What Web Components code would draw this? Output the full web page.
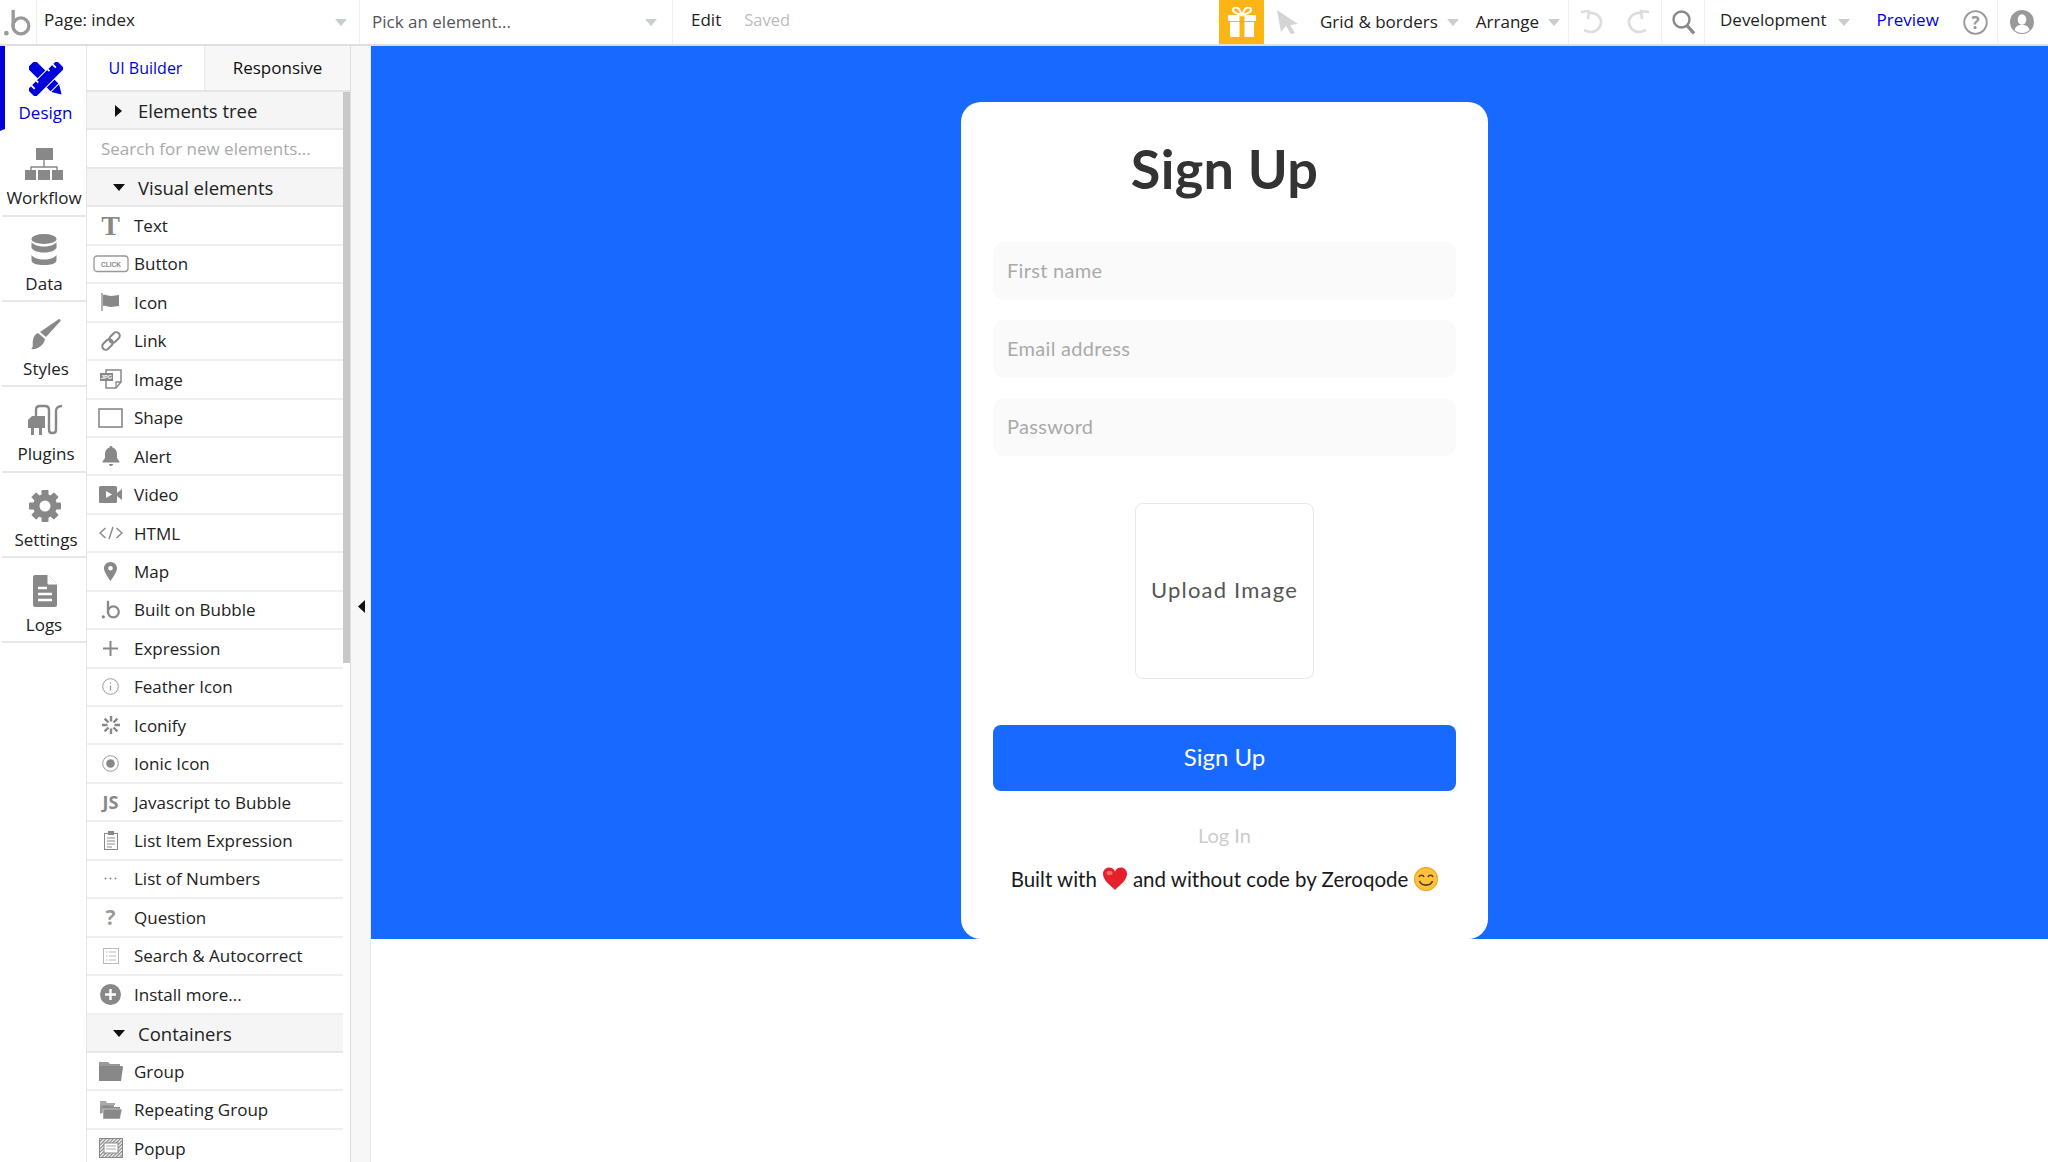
<!DOCTYPE html>
<html>
<head>
<meta charset="utf-8">
<title>Sign Up - editor</title>
<style>
    html, body { margin: 0; height: 100%; overflow: hidden; background: #fff; }
    body { font-family: "Open Sans", "Liberation Sans", sans-serif; color: #222; }
</style>
</head>
<body>
<editor-app></editor-app>
<script>
const bubbleLogo = (w, h, c = '#999') => `<svg width="${w}" height="${h}" viewBox="0 0 30 30"><circle cx="3.5" cy="26" r="2.4" fill="${c}"/><path d="M10.5 2v18" stroke="${c}" stroke-width="3.4" fill="none"/><circle cx="18.5" cy="18.5" r="8.2" stroke="${c}" stroke-width="3.4" fill="none"/></svg>`;
const arrow = (c = '#c5ced3') => `<svg width="12" height="7" viewBox="0 0 12 7" style="display:block"><path d="M0 0h12L6 7z" fill="${c}"/></svg>`;

const railIcons = {
    design: `<svg width="34" height="34" viewBox="-17 -17 34 34"><g transform="rotate(45)"><rect x="-21" y="-5.500" width="33" height="11" fill="#0000dd"/><path d="M13-5.500l9 5.500-9 5.500z" fill="#0000dd"/></g><g transform="rotate(-45)"><rect x="-21" y="-6" width="42" height="12" fill="#0000dd" stroke="#fff" stroke-width="1"/><path d="M-15-6v5M-8-6v3M8-6v3M15-6v5" stroke="#fff" stroke-width="1.800"/></g></svg>`,
    workflow: `<svg width="38" height="32" viewBox="0 0 38 32" fill="#888"><rect x="11" y="0" width="17" height="12"/><path d="M19 12v7M6 23v-4h26v4" stroke="#888" stroke-width="1.4" fill="none"/><rect x="0" y="22" width="11" height="10"/><rect x="13" y="22" width="12" height="10"/><rect x="27" y="22" width="11" height="10"/></svg>`,
    data: `<svg width="26" height="32" viewBox="0 0 26 32" fill="#888"><ellipse cx="13" cy="5" rx="12.5" ry="5"/><path d="M.5 8c2 3 7 4.500 12.500 4.500S23.500 11 25.500 8v6c-2 3-7 4.500-12.500 4.500S2.500 17 .5 14z"/><path d="M.5 17c2 3 7 4.500 12.500 4.500S23.500 20 25.500 17v5c0 4-6 5-12.500 5S.500 26 .500 22z" transform="translate(0 4)"/></svg>`,
    styles: `<svg width="32" height="32" viewBox="0 0 32 32" fill="#888"><path d="M30 0c1 0 2 1 1.500 2L17 18l-6-5z"/><path d="M9 14l7 6c-1 6-7 11-14 10 3-2 1-5 2-9 .5-3 2-6 5-7z"/></svg>`,
    plugins: `<svg width="36" height="32" viewBox="0 0 36 32"><path d="M5 12h13v12H1V16z" fill="#888"/><path d="M4 24h3v7H4zM12 24h3v7h-3z" fill="#888"/><path d="M9 12V6c0-3 1-4 4-4h5c3 0 4 2 4 4v20c0 2 1 3 3 3h1c2 0 3-1 3-3V7c0-3 2-5 6-5" stroke="#888" stroke-width="2.400" fill="none"/></svg>`,
    settings: `<svg width="32" height="32" viewBox="-16 -16 32 32"><g fill="#888"><circle r="12"/><rect x="-3.500" y="-16" width="7" height="32" rx="1"/><rect x="-3.500" y="-16" width="7" height="32" rx="1" transform="rotate(45)"/><rect x="-3.500" y="-16" width="7" height="32" rx="1" transform="rotate(90)"/><rect x="-3.500" y="-16" width="7" height="32" rx="1" transform="rotate(135)"/></g><circle r="5.500" fill="#fff"/></svg>`,
    logs: `<svg width="24" height="32" viewBox="0 0 24 32"><path d="M2 0h13l9 9v21a2 2 0 0 1-2 2H2a2 2 0 0 1-2-2V2a2 2 0 0 1 2-2z" fill="#888"/><path d="M15 0v9h9" fill="#fff" stroke="#fff" stroke-width="1"/><path d="M5 13h9M5 19h14M5 25h14" stroke="#fff" stroke-width="2.400"/></svg>`
};

const rowIcons = {
    text: `<span class="glyph" style="font:bold 28px 'Liberation Serif',serif;color:#888">T</span>`,
    button: `<svg width="36" height="18" viewBox="0 0 36 18"><rect x="1" y="1" width="34" height="15.500" rx="3" fill="none" stroke="#999" stroke-width="1.300"/><text x="18" y="11.500" text-anchor="middle" font-family="Liberation Sans" font-weight="700" font-size="6.500" fill="#888">CLICK</text></svg>`,
    icon: `<svg width="20" height="20" viewBox="0 0 20 20"><path d="M1 1v18" stroke="#888" stroke-width="1.300"/><path d="M2 3c3-1 5 1 8 1s5-1 8-1v11c-3 0-5 1-8 1s-5-2-8-1z" fill="#888"/></svg>`,
    link: `<svg width="22" height="22" viewBox="0 0 22 22" fill="none" stroke="#888" stroke-width="2"><rect x="-6" y="-3.500" width="12" height="7" rx="3.500" transform="translate(7.500 14.500) rotate(-45)"/><rect x="-6" y="-3.500" width="12" height="7" rx="3.500" transform="translate(14.500 7.500) rotate(-45)"/></svg>`,
    image: `<svg width="22" height="20" viewBox="0 0 22 20"><path d="M6 1h15v12l-5 6H6z" fill="#fff" stroke="#888" stroke-width="1.500"/><path d="M16 19v-6h5" fill="none" stroke="#888" stroke-width="1.300"/><rect x="0" y="4" width="13" height="8" fill="#888"/><text x="6.500" y="10.300" text-anchor="middle" font-family="Liberation Sans" font-weight="700" font-size="5.500" fill="#fff">JPG</text></svg>`,
    shape: `<svg width="25" height="20" viewBox="0 0 25 20"><rect x="1" y="1" width="23" height="18" fill="#fff" stroke="#888" stroke-width="1.600"/></svg>`,
    alert: `<svg width="18" height="21" viewBox="0 0 18 21" fill="#888"><path d="M9 0c1 0 1.500.7 1.500 1.500C13 2.300 15 4.500 15 8v4l2.500 3.500v1H.5v-1L3 12V8c0-3.500 2-5.700 4.500-6.500C7.500.7 8 0 9 0z"/><path d="M7 18h4c0 1.500-1 2-2 2s-2-.5-2-2z"/></svg>`,
    video: `<svg width="24" height="17" viewBox="0 0 24 17"><rect x="0" y="0" width="18" height="17" rx="1.500" fill="#888"/><path d="M18 7l5-4v11l-5-4z" fill="#888"/><path d="M7 5l6 3.500L7 12z" fill="#fff"/></svg>`,
    html: `<svg width="24" height="14" viewBox="0 0 24 14" fill="none" stroke="#888" stroke-width="1.400"><path d="M6.500 2L1 7l5.500 5M17.500 2L23 7l-5.500 5M14 1l-4 12"/></svg>`,
    map: `<svg width="13" height="19" viewBox="0 0 13 19"><path fill-rule="evenodd" d="M6.500 0C10 0 13 2.800 13 6.300c0 3.700-4.300 9.700-6.500 12.700C4.300 16 0 10 0 6.300 0 2.800 3 0 6.500 0zm0 4a2.300 2.300 0 1 0 0 4.600 2.300 2.300 0 0 0 0-4.600z" fill="#888"/></svg>`,
    bubble: bubbleLogo(20, 21, '#888'),
    plus: `<svg width="15" height="15" viewBox="0 0 15 15"><path d="M7.500 0v15M0 7.500h15" stroke="#888" stroke-width="2"/></svg>`,
    feather: `<svg width="17" height="17" viewBox="0 0 17 17" fill="none" stroke="#999" stroke-width="1"><circle cx="8.500" cy="8.500" r="7.800"/><path d="M8.500 7.500v5M8.500 4.500v1.300" stroke-width="1.300"/></svg>`,
    iconify: `<svg width="18" height="18" viewBox="-9 -9 18 18" stroke="#888" stroke-width="2.400"><path d="M0-9v5.500M0 9V3.500M-9 0h5.500M9 0H3.500M-6.400-6.400l3.900 3.900M6.400 6.400L2.500 2.500M-6.400 6.400l3.900-3.900M6.400-6.400L2.500-2.500"/></svg>`,
    ionic: `<svg width="17" height="17" viewBox="0 0 17 17"><circle cx="8.500" cy="8.500" r="7.800" fill="none" stroke="#999" stroke-width="1"/><circle cx="8.500" cy="8.500" r="4.300" fill="#888"/></svg>`,
    js: `<span class="glyph" style="font:bold 18px 'Open Sans',sans-serif;color:#888">JS</span>`,
    clipboard: `<svg width="14" height="19" viewBox="0 0 14 19" fill="none" stroke="#888" stroke-width="1"><rect x=".5" y="2.500" width="13" height="16"/><rect x="4.500" y=".5" width="5" height="3" fill="#888"/><path d="M3 7h8M3 10h8M3 13h8M3 16h5"/></svg>`,
    dots: `<svg width="13" height="3" viewBox="0 0 13 3" fill="#888"><circle cx="1.500" cy="1.500" r="1"/><circle cx="6.500" cy="1.500" r="1"/><circle cx="11.500" cy="1.500" r="1"/></svg>`,
    question: `<span class="glyph" style="font:bold 21px 'Open Sans',sans-serif;color:#999">?</span>`,
    search: `<svg width="16" height="16" viewBox="0 0 16 16" fill="none" stroke="#bbb" stroke-width="1"><rect x=".5" y=".5" width="15" height="15"/><path d="M3 4h1.500M6 4h7M3 8h1.500M6 8h7M3 12h1.500M6 12h7"/></svg>`,
    install: `<svg width="21" height="21" viewBox="0 0 21 21"><circle cx="10.500" cy="10.500" r="10.500" fill="#888"/><path d="M10.500 5v11M5 10.500h11" stroke="#fff" stroke-width="2.400"/></svg>`,
    group: `<svg width="24" height="20" viewBox="0 0 24 20"><path d="M0 1h9l2 2h10v3H3L0 10z" fill="#999"/><path d="M0 5h23l1 1-2 14H0z" fill="#888"/></svg>`,
    repeating: `<svg width="22" height="20" viewBox="0 0 22 20"><path d="M0 1h6l1 2h8v2H0z" fill="#aaa"/><path d="M0 5h14v8H2L0 14z" fill="#999"/><path d="M3 6h7l1 1h9v2H3z" fill="#888"/><path d="M3 9h19l-2 10H3z" fill="#888" stroke="#fff" stroke-width=".5"/></svg>`,
    popup: `<svg width="24" height="20" viewBox="0 0 24 20"><defs><pattern id="h" width="2.500" height="2.500" patternUnits="userSpaceOnUse" patternTransform="rotate(45)"><rect width="1.300" height="2.500" fill="#888"/></pattern></defs><rect x=".5" y=".5" width="23" height="19" fill="url(#h)" stroke="#888"/><rect x="5" y="5" width="14" height="10" fill="#fff" stroke="#888"/><path d="M7 8h10M7 11h10" stroke="#aaa"/></svg>`
};

class RailItem extends HTMLElement {
    static tag = "rail-item";
    connectedCallback() {
        const active = this.hasAttribute('active');
        const nudge = +this.getAttribute('nudge') || 0;
        this.attachShadow({ mode: 'open' });
        this.shadowRoot.innerHTML = `
            <style>
                :host { display: block; height: 85.33px; box-sizing: border-box; border-bottom: 2px solid #e8e8e8; margin-left: 2px; }
                :host([active]) { margin-left: 0; border-left: 5px solid #0000dd; border-bottom-color: transparent; }
                .wrap { height: 100%; display: flex; flex-direction: column; align-items: center; padding-left: ${nudge}px; box-sizing: border-box; }
                .ico { height: 34px; margin-top: 16px; margin-right: ${nudge / 2}px; display: flex; align-items: center; justify-content: center; }
                .lbl { font-size: 17px; line-height: 22px; margin-top: 6px; color: ${active ? '#0000dd' : '#222'}; white-space: nowrap; }
            </style>
            <div class="wrap"><div class="ico">${railIcons[this.getAttribute('icon')]}</div><div class="lbl"><slot></slot></div></div>`;
    }
}

class SideRail extends HTMLElement {
    static tag = "side-rail";
    connectedCallback() {
        this.attachShadow({ mode: 'open' });
        this.shadowRoot.innerHTML = `
            <style>
                :host { display: block; background: #fff; width: 86px; }
            </style>
            <rail-item icon="design" active nudge="0">Design</rail-item>
            <rail-item icon="workflow" nudge="0">Workflow</rail-item>
            <rail-item icon="data" nudge="0">Data</rail-item>
            <rail-item icon="styles" nudge="4">Styles</rail-item>
            <rail-item icon="plugins" nudge="4">Plugins</rail-item>
            <rail-item icon="settings" nudge="4">Settings</rail-item>
            <rail-item icon="logs" nudge="-2">Logs</rail-item>`;
    }
}

class ElementRow extends HTMLElement {
    static tag = "element-row";
    connectedCallback() {
        this.attachShadow({ mode: 'open' });
        this.shadowRoot.innerHTML = `
            <style>
                :host { display: flex; align-items: center; height: 38.44px; box-sizing: border-box; border-bottom: 2px solid #efefef; font-size: 17px; color: #222; white-space: nowrap; }
                .ico { width: 47px; flex: none; display: flex; align-items: center; justify-content: center; }
                .glyph { line-height: 24px; display: block; }
            </style>
            <div class="ico">${rowIcons[this.getAttribute('icon')]}</div><slot></slot>`;
    }
}

class SectionRow extends HTMLElement {
    static tag = "section-row";
    connectedCallback() {
        const closed = this.hasAttribute('closed');
        this.attachShadow({ mode: 'open' });
        this.shadowRoot.innerHTML = `
            <style>
                :host { display: flex; align-items: center; height: 38.44px; box-sizing: border-box; background: #f5f5f5; border-bottom: 2px solid #e8e8e8; font-size: 18.500px; color: #222; white-space: nowrap; padding-top: 1px; }
                .tri { width: 51px; flex: none; display: flex; justify-content: center; padding-right: 12px; box-sizing: border-box; padding-left: 24px; }
            </style>
            <div class="tri">${closed
                ? '<svg width="7" height="12" viewBox="0 0 7 12"><path d="M0 0l7 6-7 6z" fill="#111"/></svg>'
                : '<svg width="12" height="7" viewBox="0 0 12 7"><path d="M0 0h12L6 7z" fill="#111"/></svg>'}</div><slot></slot>`;
    }
}

class ElementPanel extends HTMLElement {
    static tag = "element-panel";
    static visual = [
        ['text', 'Text'], ['button', 'Button'], ['icon', 'Icon'], ['link', 'Link'], ['image', 'Image'],
        ['shape', 'Shape'], ['alert', 'Alert'], ['video', 'Video'], ['html', 'HTML'], ['map', 'Map'],
        ['bubble', 'Built on Bubble'], ['plus', 'Expression'], ['feather', 'Feather Icon'], ['iconify', 'Iconify'],
        ['ionic', 'Ionic Icon'], ['js', 'Javascript to Bubble'], ['clipboard', 'List Item Expression'],
        ['dots', 'List of Numbers'], ['question', 'Question'], ['search', 'Search & Autocorrect'], ['install', 'Install more...']
    ];
    static containers = [['group', 'Group'], ['repeating', 'Repeating Group'], ['popup', 'Popup']];
    connectedCallback() {
        const rows = list => list.map(([i, t]) => `<element-row icon="${i}">${t.replace('&', '&amp;')}</element-row>`).join('');
        this.attachShadow({ mode: 'open' });
        this.shadowRoot.innerHTML = `
            <style>
                :host { display: flex; flex-direction: column; background: #fff; border-left: 1px solid #e5e5e5; border-right: 1px solid #ddd; overflow: hidden; }
                .tabs { display: flex; height: 46px; flex: none; box-sizing: border-box; border-bottom: 2px solid #e5e5e5; font-size: 16px; line-height: 44px; text-align: center; }
                .tab1 { width: 117px; color: #0000dd; }
                .tab2 { flex: 1; background: #f7f7f7; border-left: 1px solid #e8e8e8; color: #111; font-size: 17px; }
                .body { display: flex; flex: 1; min-height: 0; }
                .list { flex: 1; min-width: 0; overflow: hidden; }
                .track { width: 7px; flex: none; }
                .thumb { height: 571px; background: #c8c8c8; }
                .search { height: 38.44px; box-sizing: border-box; border-bottom: 2px solid #e8e8e8; padding-left: 14px; font-size: 17px; line-height: 37px; color: #aaa; white-space: nowrap; }
            </style>
            <div class="tabs"><div class="tab1">UI Builder</div><div class="tab2">Responsive</div></div>
            <div class="body">
                <div class="list">
                    <section-row closed>Elements tree</section-row>
                    <div class="search">Search for new elements...</div>
                    <section-row>Visual elements</section-row>
                    ${rows(ElementPanel.visual)}
                    <section-row>Containers</section-row>
                    ${rows(ElementPanel.containers)}
                </div>
                <div class="track"><div class="thumb"></div></div>
            </div>`;
    }
}

class TopBar extends HTMLElement {
    static tag = "top-bar";
    connectedCallback() {
        this.attachShadow({ mode: 'open' });
        this.shadowRoot.innerHTML = `
            <style>
                :host { display: flex; align-items: stretch; height: 46px; box-sizing: border-box; background: #fff; border-bottom: 2px solid #dfdfdf; font-size: 17px; color: #222; white-space: nowrap; }
                .sec { display: flex; align-items: center; box-sizing: border-box; border-right: 1px solid #eee; height: 44px; flex: none; }
                .label { padding-bottom: 5px; }
                .low { padding-bottom: 2px; }
                .logo { width: 37px; padding-left: 3px; }
                .page { width: 323px; padding: 0 12px 0 7px; justify-content: space-between; }
                .pick { width: 313px; padding: 0 15px 0 12px; justify-content: space-between; color: #555; }
                .edit { flex: 1 1 0; padding-left: 18px; border: 0; }
                .saved { color: #bbb; margin-left: 23px; font-size: 16.500px; }
                .gift { width: 45px; background: #fdb515; justify-content: center; border: 0; }
                .tools { width: 305px; padding-left: 13px; }
                .tools .t1 { margin-left: 22px; }
                .tools .a1 { margin-left: 9px; }
                .tools .t2 { margin-left: 17px; }
                .undo { width: 93px; padding-left: 11px; gap: 24px; }
                .find { width: 43px; justify-content: center; }
                .env { width: 293px; padding-left: 15px; }
                .env .a { margin-left: 11px; }
                .env .prev { margin-left: 27px; color: #0000dd; }
                .env .help { margin-left: 24px; }
                .me { width: 50px; padding-left: 12px; border: 0; }
            </style>
            <div class="sec logo">${bubbleLogo(29, 29)}</div>
            <div class="sec page"><span class="label">Page: index</span>${arrow()}</div>
            <div class="sec pick"><span class="low">Pick an element...</span>${arrow()}</div>
            <div class="sec edit"><span class="label">Edit</span><span class="saved label">Saved</span></div>
            <div class="sec gift"><svg width="28" height="30" viewBox="0 0 28 30" fill="#fff"><rect x="0" y="8" width="28" height="6"/><rect x="2" y="15" width="24" height="15"/><rect x="11.500" y="8" width="5" height="22" fill="#fdb515"/><path d="M14 8C10 7 5 6 5 3s4-3 6-1l3 6zm0 0c4-1 9-2 9-5s-4-3-6-1l-3 6z" fill="none" stroke="#fff" stroke-width="2"/></svg></div>
            <div class="sec tools">
                <svg width="21" height="24" viewBox="0 0 21 24"><path d="M0 0l21 14-8 1 5 8-4 1-5-8-5 6z" fill="#d4d4d4"/></svg>
                <span class="t1 low">Grid &amp; borders</span><span class="a1">${arrow()}</span>
                <span class="t2 low">Arrange</span><span class="a1">${arrow()}</span>
            </div>
            <div class="sec undo">
                <svg width="23" height="24" viewBox="0 0 23 24" fill="none" stroke="#ddd" stroke-width="2.600"><path d="M8 3c7-1 13 3 13 9s-5 10-10 10c-3 0-5-1-7-2"/><path d="M1 2l8-1-1 8" /></svg>
                <svg width="23" height="24" viewBox="0 0 23 24" fill="none" stroke="#ddd" stroke-width="2.600"><path d="M15 3C8 2 2 6 2 12s5 10 10 10c3 0 5-1 7-2"/><path d="M22 2l-8-1 1 8"/></svg>
            </div>
            <div class="sec find"><svg width="23" height="25" viewBox="0 0 23 25" fill="none" stroke="#8a8a8a"><circle cx="9.500" cy="9.500" r="8" stroke-width="2.400"/><path d="M15 15.500l7 8" stroke-width="3.400"/></svg></div>
            <div class="sec env">
                <span class="label">Development</span><span class="a">${arrow()}</span><span class="prev label">Preview</span>
                <svg class="help" width="25" height="25" viewBox="0 0 25 25"><circle cx="12.500" cy="12.500" r="11.300" fill="none" stroke="#999" stroke-width="1.800"/><text x="12.500" y="18.500" text-anchor="middle" font-family="Open Sans" font-weight="700" font-size="17" fill="#999">?</text></svg>
            </div>
            <div class="sec me"><svg width="24" height="24" viewBox="0 0 24 24"><circle cx="12" cy="12" r="12" fill="#999"/><ellipse cx="12" cy="9.500" rx="4.300" ry="5.300" fill="#fff"/><path d="M4.500 20c.5-3 3-4.500 5.500-5h4c2.500.5 5 2 5.500 5-2 2-4.500 3-7.500 3s-5.500-1-7.500-3z" fill="#fff"/></svg></div>`;
    }
}

class TextField extends HTMLElement {
    static tag = "text-field";
    connectedCallback() {
        this.attachShadow({ mode: 'open' });
        this.shadowRoot.innerHTML = `
            <style>
                :host { display: flex; align-items: center; height: 58px; box-sizing: border-box; padding: 0 0 2px 14px; background: #fafafa; border-radius: 11px; color: #aaa; font-size: 20px; letter-spacing: .3px; }
            </style><slot></slot>`;
    }
}

class SignupCard extends HTMLElement {
    static tag = "signup-card";
    connectedCallback() {
        const heart = `<svg class="emo" width="24" height="24" viewBox="0 0 24 24"><path d="M12 23C7 18 0 13 0 7c0-4 3-6.500 6-6.500 3 0 5 1.500 6 4 1-2.500 3-4 6-4 3 0 6 2.500 6 6.500 0 6-7 11-12 16z" fill="#e5202b"/><ellipse cx="6.500" cy="6" rx="3" ry="2.200" fill="#f56a6f"/></svg>`;
        const smile = `<svg class="emo" width="24" height="24" viewBox="0 0 24 24"><circle cx="12" cy="12" r="12" fill="#fcc23c"/><circle cx="12" cy="12" r="11.500" fill="none" stroke="#eda31e"/><path d="M5 10c1-2.500 4-2.500 5 0M14 10c1-2.500 4-2.500 5 0" fill="none" stroke="#5a3a10" stroke-width="1.500"/><path d="M5.500 14c2 5.500 11 5.500 13 0" fill="none" stroke="#5a3a10" stroke-width="1.600"/></svg>`;
        this.attachShadow({ mode: 'open' });
        this.shadowRoot.innerHTML = `
            <style>
                :host { display: flex; flex-direction: column; box-sizing: border-box; width: 527px; height: 837px; padding: 31px 32px 0; background: #fff; border-radius: 20px; font-family: Lato, "Noto Sans", sans-serif; }
                h1 { margin: 0 0 37px; font-size: 54px; line-height: 72px; font-weight: 700; color: #333; text-align: center; letter-spacing: .3px; }
                .fields { display: flex; flex-direction: column; gap: 20px; }
                .upload { align-self: center; width: 179px; height: 176px; margin-top: 47px; padding-bottom: 4px; box-sizing: border-box; border: 1px solid #e8e8e8; border-radius: 8px; display: flex; align-items: center; justify-content: center; font-size: 22px; color: #555; letter-spacing: 1.200px; }
                .go { margin-top: 46px; height: 66px; padding-bottom: 3px; box-sizing: border-box; background: #1769ff; border-radius: 8px; color: #fff; font-size: 24px; display: flex; align-items: center; justify-content: center; }
                .login { margin-top: 29px; line-height: 30px; text-align: center; color: #ccc; font-size: 20px; }
                .built { margin-top: 14px; line-height: 30px; display: flex; justify-content: center; align-items: center; gap: 6px; color: #1a1a1a; font-size: 20.500px; white-space: nowrap; }
            </style>
            <h1>Sign Up</h1>
            <div class="fields">
                <text-field>First name</text-field>
                <text-field>Email address</text-field>
                <text-field>Password</text-field>
            </div>
            <div class="upload">Upload Image</div>
            <div class="go">Sign Up</div>
            <div class="login">Log In</div>
            <div class="built"><span>Built with</span>${heart}<span>and without code by Zeroqode</span>${smile}</div>`;
    }
}

class EditorApp extends HTMLElement {
    static tag = "editor-app";
    connectedCallback() {
        this.attachShadow({ mode: 'open' });
        this.shadowRoot.innerHTML = `
            <style>
                :host { display: flex; flex-direction: column; height: 1162px; overflow: hidden; }
                .main { flex: 1; min-height: 0; display: grid; grid-template-columns: 86px 265px 20px 1fr; }
                .strip { background: #f7f7f7; border-right: 1px solid #e8e8e8; display: flex; align-items: flex-start; padding: 554px 0 0 7px; box-sizing: border-box; }
                .canvas { height: 893px; box-sizing: border-box; padding: 56px 0 0 590px; background: #1769ff; overflow: hidden; }
            </style>
            <top-bar></top-bar>
            <div class="main">
                <side-rail></side-rail>
                <element-panel></element-panel>
                <div class="strip"><svg width="7" height="13" viewBox="0 0 7 13"><path d="M7 0v13L0 6.500z" fill="#111"/></svg></div>
                <div class="canvas"><signup-card></signup-card></div>
            </div>`;
    }
}

[RailItem, SideRail, ElementRow, SectionRow, ElementPanel, TopBar, TextField, SignupCard, EditorApp]
    .forEach(c => customElements.define(c.tag, c));
</script>
</body>
</html>
